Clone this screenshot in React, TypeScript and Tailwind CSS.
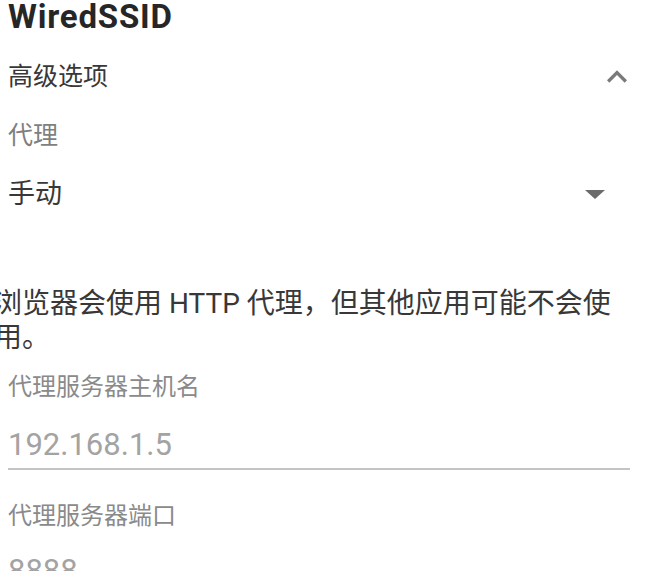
const font = { fontFamily: '"Roboto", "Noto Sans CJK SC", sans-serif' };

const ChevronUp = () => (
  <svg width="40" height="40" viewBox="0 0 24 24" className="fill-[#7a7a7a]">
    <path d="M12 8l-6 6 1.41 1.41L12 10.83l4.59 4.58L18 14z" />
  </svg>
);

const DropArrow = () => (
  <svg width="20" height="9" viewBox="0 0 20 9" className="fill-[#6b6b6b]">
    <polygon points="0,0 20,0 10,9" />
  </svg>
);

export default function App() {
  return (
    <div
      className="h-[571px] w-[645px] overflow-hidden bg-white pl-2"
      style={font}>
      <h1 className="h-[34px] text-[33px] font-bold leading-[34px] tracking-[0.8px] text-[#262626]">
        WiredSSID
      </h1>

      {/* advanced options header */}
      <div className="mt-[22px] flex h-[41px] items-center justify-between pr-[8px]">
        <span className="text-[25px] leading-[41px] text-[#383838]">高级选项</span>
        <ChevronUp />
      </div>

      <div className="mt-[23px] h-[32px] text-[25px] leading-[32px] text-[#7f7f7f]">
        代理
      </div>

      <div className="mt-[24px] flex h-[36px] items-center justify-between pr-[40px]">
        <span className="text-[27px] leading-[36px] text-[#383838]">手动</span>
        <DropArrow />
      </div>

      <p className="-ml-[14px] mt-[75px] w-[634px] text-[28px] leading-[34px] text-[#383838]">
        浏览器会使用 HTTP 代理，但其他应用可能不会使用。
      </p>

      <div className="mt-[16px] h-[32px] text-[24px] leading-[32px] text-[#8a8a8a]">
        代理服务器主机名
      </div>
      <div className="mt-[24px] h-[36px] text-[31px] leading-[36px] text-[#a3a3a3]">
        192.168.1.5
      </div>
      <div className="mt-[5px] mr-[15px] h-[2px] bg-[#c4c4c4]" />

      <div className="mt-[30px] h-[32px] text-[24px] leading-[32px] text-[#8a8a8a]">
        代理服务器端口
      </div>
      <div className="mt-[21px] h-[36px] text-[31px] leading-[36px] text-[#a3a3a3]">
        8888
      </div>
    </div>
  );
}
